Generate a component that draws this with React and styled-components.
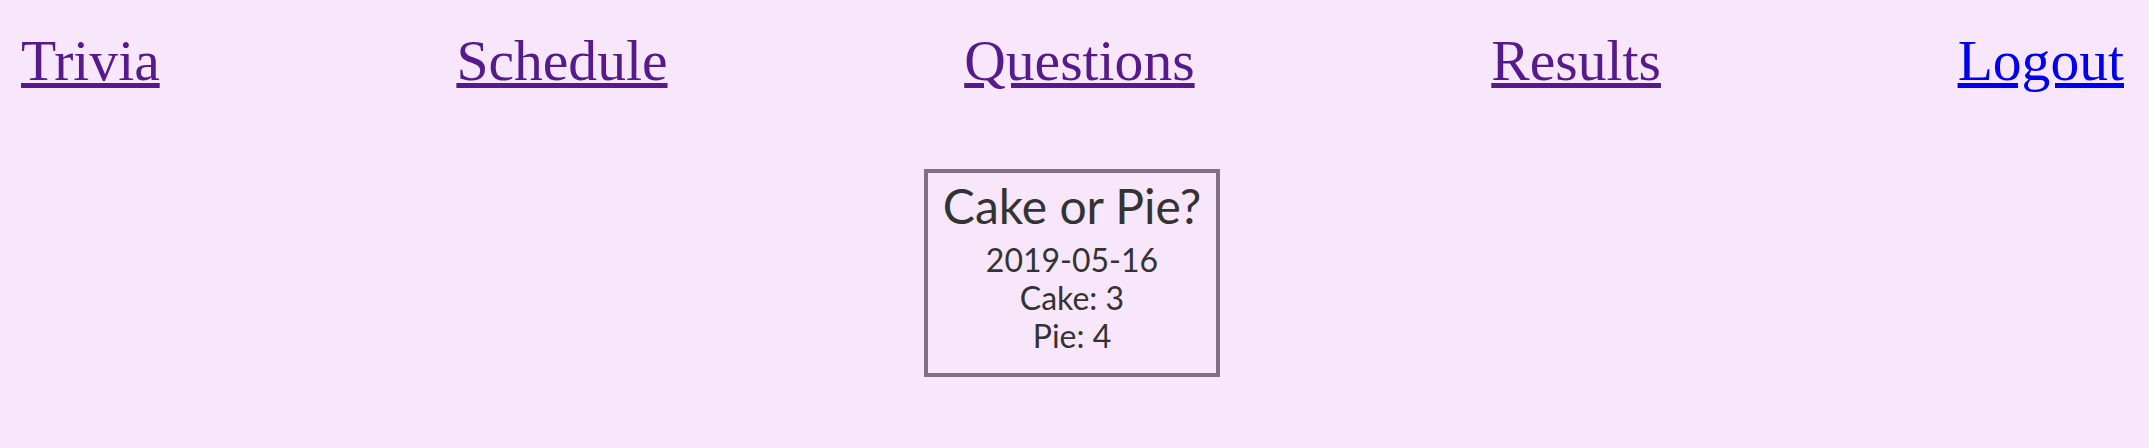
import React from 'react'
import styled, { createGlobalStyle } from 'styled-components';

const GlobalStyle = createGlobalStyle`
    html, body {
        margin: 0;
        padding: 0;
        background: #f8e6fa;
    }
    body {
        font-family: "Liberation Serif", "Times New Roman", serif;
    }
`

const links = [
    { label: 'Trivia', visited: true },
    { label: 'Schedule', visited: true },
    { label: 'Questions', visited: true },
    { label: 'Results', visited: true },
    { label: 'Logout', visited: false },
]

const App = () => {
    return (
        <Wrapper>
            <GlobalStyle/>
            <NavBar>
                {links.map(link => (
                    <NavLink key={link.label} href="#" $visited={link.visited}>
                        {link.label}
                    </NavLink>
                ))}
            </NavBar>

            <QuestionWrapper>
                {/*Poll card*/}
                <QuestionCard>
                    <Title>Cake or Pie?</Title>
                    <Line>2019-05-16</Line>
                    <Line>Cake: 3</Line>
                    <Line>Pie: 4</Line>
                </QuestionCard>
            </QuestionWrapper>
        </Wrapper>
    )
}

export default App

const Wrapper = styled.div`
    width: 2149px;
    min-height: 448px;
    background: #f8e6fa;
`
const NavBar = styled.nav`
    display: flex;
    justify-content: space-between;
    align-items: baseline;
    padding: 28px 25px 0 21px;
`
const NavLink = styled.a`
    font-family: "Liberation Serif", "Times New Roman", serif;
    font-size: 57.6px;
    line-height: normal;
    color: ${props => props.$visited ? '#551a8b' : '#0000ee'};
    text-decoration: underline;
`
const QuestionWrapper = styled.div`
    display: flex;
    justify-content: center;
    margin-top: 76px;
    padding-right: 5px;
`
const QuestionCard = styled.div`
    display: flex;
    flex-direction: column;
    align-items: center;
    padding: 4px 15px 17px;
    border: 4px solid #836f86;
    font-family: Lato, "Open Sans", sans-serif;
    color: #333333;
`
const Title = styled.div`
    font-size: 48px;
    line-height: 1.2;
    margin-bottom: 6px;
`
const Line = styled.div`
    font-size: 32px;
    line-height: 1.2;
`
